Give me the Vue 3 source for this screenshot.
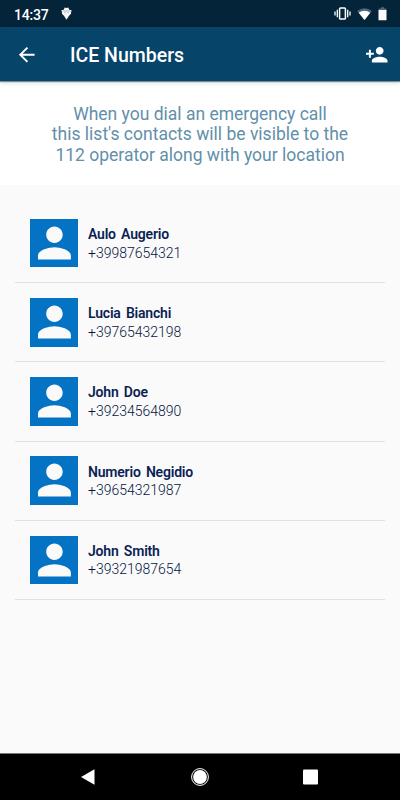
<script setup>
import { ref } from 'vue'

const contacts = ref([
  { name: 'Aulo Augerio', phone: '+39987654321' },
  { name: 'Lucia Bianchi', phone: '+39765432198' },
  { name: 'John Doe', phone: '+39234564890' },
  { name: 'Numerio Negidio', phone: '+39654321987' },
  { name: 'John Smith', phone: '+39321987654' },
])
</script>

<template>
  <div class="screen">
    <div class="status-bar">
      <span class="time">14:37</span>
      <svg class="notification" viewBox="0 0 12 14">
        <path d="M3 2.800 4 .5l2 .6 2-.6 1 2.300 2.500.7v1.300L10.300 5.200l.7.400v1.600L8.800 9.500 6 13.800 3.200 9.500 1 7.200V5.600l.7-.4L.5 4.800V3.500z" fill="#f4f6f7" />
        <path d="M2.500 4.300h7M3.500 6.300h1.500M7 6.300h1.500" stroke="#8797a0" stroke-width=".7" />
      </svg>
      <div class="system-icons">
        <svg class="vibrate" viewBox="0 0 17 13">
          <rect x="5.600" y="1" width="5.800" height="11" rx=".8" fill="none" stroke="#fff" stroke-width="1.500" />
          <path d="M3.300 2.700v7.600M13.700 2.700v7.600M1 4.600v3.800M16 4.600v3.800" stroke="#fff" stroke-width="1.300" />
        </svg>
        <svg class="wifi" viewBox="0 0 15 12">
          <path d="M.2 3Q7.500-2.500 14.800 3L7.500 12z" fill="#50697a" />
          <path d="M1.700 4.700Q7.500 1 13.300 4.700L7.500 12z" fill="#fff" />
        </svg>
        <svg class="battery" viewBox="0 0 9 14">
          <path d="M.7 1.500H3V.3h3v1.200h2.300V4H.7z" fill="#50697a" />
          <path d="M.5 3h8v9.700q0 .6-.6.600H1.100q-.6 0-.6-.6z" fill="#fff" />
        </svg>
      </div>
    </div>

    <header class="app-bar">
      <svg class="icon" viewBox="0 0 24 24">
        <path d="M20 11H7.830l5.590-5.590L12 4l-8 8 8 8 1.410-1.410L7.830 13H20v-2z" />
      </svg>
      <h1>ICE Numbers</h1>
      <svg class="icon add" viewBox="0 0 24 24">
        <path d="M15 12c2.210 0 4-1.790 4-4s-1.790-4-4-4-4 1.790-4 4 1.790 4 4 4zm-9-2V7H4v3H1v2h3v3h2v-3h3v-2H6zm9 4c-2.670 0-8 1.340-8 4v2h16v-2c0-2.660-5.330-4-8-4z" />
      </svg>
    </header>

    <p class="intro">
      When you dial an emergency call<br />
      this list's contacts will be visible to the<br />
      112 operator along with your location
    </p>

    <ul class="contacts">
      <li v-for="contact in contacts" :key="contact.phone" class="contact">
        <svg class="avatar" viewBox="0.1 0.3 23.6 23.6">
          <path d="M12 12c2.210 0 4-1.790 4-4s-1.790-4-4-4-4 1.790-4 4 1.790 4 4 4zm0 2c-2.670 0-8 1.340-8 4v2h16v-2c0-2.660-5.330-4-8-4z" />
        </svg>
        <div class="details">
          <div class="name">{{ contact.name }}</div>
          <div class="phone">{{ contact.phone }}</div>
        </div>
      </li>
    </ul>

    <nav class="nav-bar">
      <svg viewBox="0 0 20 20"><path d="M2 10 15.500 2.300v15.400z" /></svg>
      <svg viewBox="0 0 20 20">
        <circle cx="10" cy="10" r="8.400" class="ring" />
        <circle cx="10" cy="10" r="6.900" />
      </svg>
      <svg viewBox="0 0 20 20"><rect x="3" y="2.500" width="15" height="15" rx="1" /></svg>
    </nav>
  </div>
</template>

<style>
body {
  margin: 0;
}
</style>

<style scoped>
.screen {
  display: flex;
  flex-direction: column;
  width: 400px;
  height: 800px;
  overflow: hidden;
  background: #fafafa;
  font-family: Roboto, sans-serif;
}

.status-bar {
  display: flex;
  align-items: center;
  flex: none;
  box-sizing: border-box;
  height: 27px;
  padding: 0 13px 0 14px;
  background: #042539;
  color: #fff;
}

.time {
  width: 47px;
  padding-top: 2px;
  font-size: 14px;
  font-weight: 500;
  line-height: 20px;
  letter-spacing: -0.200px;
}

.notification {
  width: 11px;
  height: 13px;
}

.system-icons {
  display: flex;
  align-items: center;
  margin-left: auto;
}

.vibrate {
  width: 17px;
  height: 13px;
  margin-right: 6px;
}

.wifi {
  width: 15px;
  height: 12px;
  margin-right: 6px;
}

.battery {
  width: 9px;
  height: 14px;
}

.app-bar {
  display: flex;
  align-items: center;
  flex: none;
  box-sizing: border-box;
  height: 54px;
  padding: 1px 11.500px 0 15px;
  background: #064469;
  box-shadow: 0 1px 1px rgba(6, 40, 75, 0.5), 0 2px 5px rgba(0, 0, 0, 0.13);
  z-index: 1;
}

.icon {
  width: 23.500px;
  height: 23.500px;
  fill: #fff;
}

.app-bar h1 {
  margin: 0 0 0 31.500px;
  padding-top: 3px;
  color: #fff;
  font-size: 19.500px;
  font-weight: 500;
  line-height: 26px;
}

.add {
  margin-left: auto;
}

.intro {
  flex: none;
  box-sizing: border-box;
  height: 104px;
  margin: 0;
  padding-top: 23px;
  background: #fff;
  color: #628fa9;
  font-size: 17.500px;
  font-weight: 400;
  line-height: 20.300px;
  text-align: center;
}

.contacts {
  flex: 1;
  margin: 0;
  padding: 19px 15px 0;
  list-style: none;
}

.contact {
  display: flex;
  align-items: center;
  box-sizing: border-box;
  height: 79.200px;
  padding-left: 14.500px;
  border-bottom: 1px solid #dde2e6;
}

.avatar {
  width: 48.500px;
  height: 48.500px;
  background: #0573c4;
  fill: #fafafa;
}

.details {
  margin-left: 10px;
  padding-top: 1px;
  color: #0c1f55;
  font-size: 14px;
  line-height: 18.500px;
}

.name {
  font-weight: 600;
  letter-spacing: -0.200px;
  word-spacing: 2px;
}

.phone {
  color: #061540;
  font-weight: 300;
}

.nav-bar {
  display: flex;
  align-items: center;
  justify-content: center;
  gap: 90.500px;
  flex: none;
  height: 46px;
  padding-right: 1px;
  border-top: 1px solid #777;
  background: #000;
}

.nav-bar svg {
  width: 20px;
  height: 20px;
  fill: #fff;
}

.nav-bar .ring {
  fill: none;
  stroke: #fff;
}
</style>
